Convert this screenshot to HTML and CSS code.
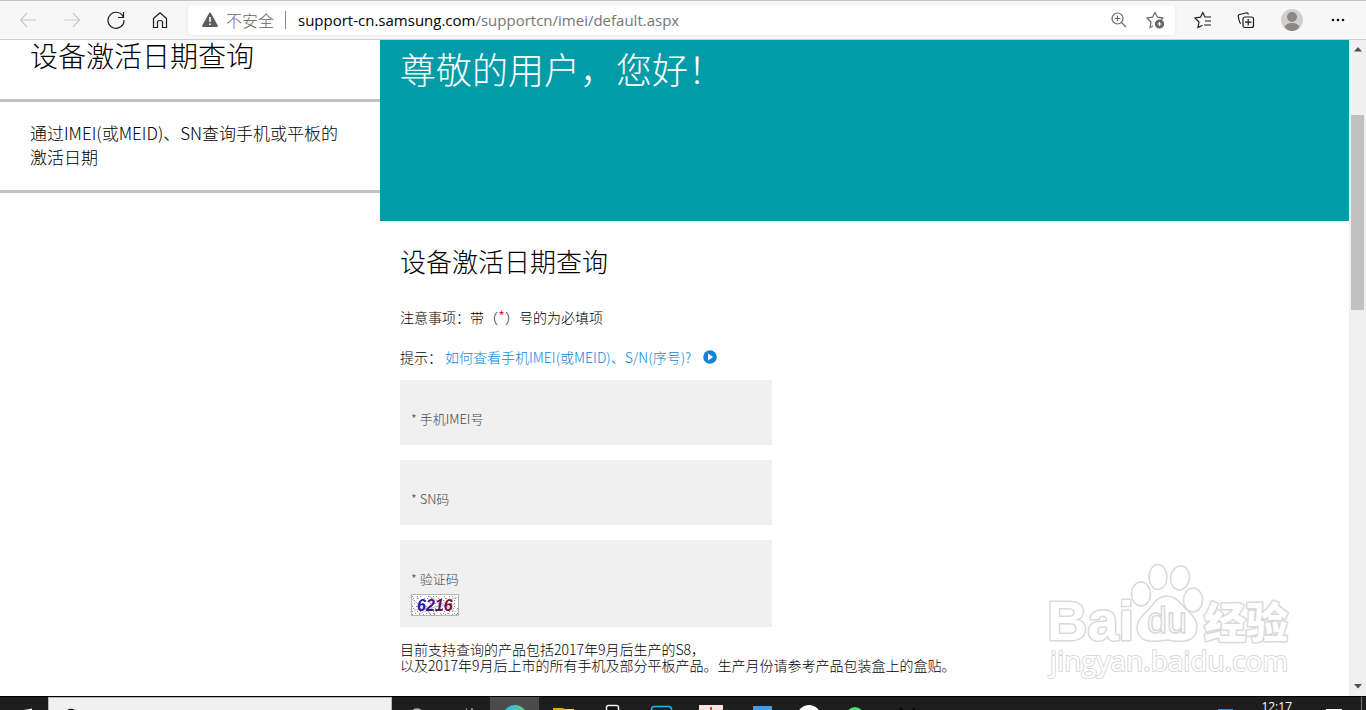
FILE: index.html
```html
<!DOCTYPE html>
<html lang="zh-CN">
<head>
<meta charset="utf-8">
<title>设备激活日期查询</title>
<link rel="stylesheet" href="styles.css">
</head>
<body>
<div class="browser">
  <header class="toolbar">
    <nav class="nav-buttons">
      <button class="icon-button disabled" aria-label="后退"><svg width="20" height="20" viewBox="0 0 20 20"><path d="M18 10H2.500M9 3L2.500 10L9 17"/></svg></button>
      <button class="icon-button disabled" aria-label="前进"><svg width="20" height="20" viewBox="0 0 20 20"><path d="M2 10H17.500M11 3L17.500 10L11 17"/></svg></button>
      <button class="icon-button" aria-label="刷新"><svg width="20" height="20" viewBox="0 0 20 20"><path d="M17.500 7.500A8 8 0 1 0 18 10M17.500 2V7.500H12"/></svg></button>
      <button class="icon-button" aria-label="主页"><svg width="20" height="20" viewBox="0 0 20 20"><path d="M3.500 8.500L10 2.700L16.500 8.500V17.500H12.500V12.500Q12.500 10.500 10 10.500T7.500 12.500V17.500H3.500Z"/></svg></button>
    </nav>
    <div class="address">
      <svg class="warning" width="18" height="18" viewBox="0 0 18 18"><path d="M9 1.500Q9.700 1.500 10 2.200L17 15Q17.200 16 16 16H2Q.8 16 1 15L8 2.200Q8.300 1.500 9 1.500Z" fill="#5d5d5d"/><path d="M9 6V11M9 12.500V14" stroke="#fff" stroke-width="1.600"/></svg>
      <span class="insecure">不安全</span>
      <span class="url"><b>support-cn.samsung.com</b>/supportcn/imei/default.aspx</span>
      <button class="icon-button muted" aria-label="缩放"><svg width="18" height="18" viewBox="0 0 18 18"><circle cx="7.500" cy="7.500" r="5.500"/><path d="M11.500 11.500L16 16M4.700 7.500H10.300M7.500 4.700V10.300"/></svg></button>
      <button class="icon-button muted" aria-label="添加到收藏夹"><svg width="18" height="18" viewBox="0 0 18 18"><path d="M7 15L4 16.500L5 11L1 7L6.500 6.200L9 1.500L11.500 6.200L16.800 7L15 9"/><circle cx="13.500" cy="13" r="4" fill="#666"/><path d="M11.500 13H15.500M13.500 11V15" stroke="#fff"/></svg></button>
    </div>
    <nav class="tools">
      <button class="icon-button" aria-label="收藏夹"><svg width="18" height="18" viewBox="0 0 18 18"><path d="M8.500 14.200L4 16.500L5 11L1 7L6.500 6.200L8.800 1.500L11 6H17M11 10H17M10 14H17"/></svg></button>
      <button class="icon-button" aria-label="集锦"><svg width="18" height="18" viewBox="0 0 18 18"><path d="M4 12.500Q2.500 12 2 9L1.300 5.500Q1 4 2.500 3.500L9 2Q11 1.500 11.300 3.500"/><rect x="6" y="6" width="10.500" height="10.500" rx="2"/><path d="M8 11.200H14.500M11.200 8V14.500"/></svg></button>
      <button class="icon-button" aria-label="用户"><svg width="24" height="24" viewBox="0 0 24 24"><circle cx="12" cy="12" r="11" fill="#d2d0ce" stroke="none"/><circle cx="12" cy="9" r="5" fill="#8a8785" stroke="none"/><path d="M4.500 19Q6 15 12 15T19.500 19Q16.500 23 12 23T4.500 19Z" fill="#8a8785" stroke="none"/></svg></button>
      <button class="icon-button" aria-label="更多"><svg width="18" height="18" viewBox="0 0 18 18"><g fill="#111" stroke="none"><circle cx="4" cy="9" r="1.300"/><circle cx="9" cy="9" r="1.300"/><circle cx="14" cy="9" r="1.300"/></g></svg></button>
    </nav>
  </header>

  <div class="viewport">
    <aside class="sidebar">
      <h1>设备激活日期查询</h1>
      <p>通过IMEI(或MEID)、SN查询手机或平板的激活日期</p>
    </aside>
    <main class="content">
      <div class="banner">尊敬的用户，您好！</div>
      <form class="query">
        <h2>设备激活日期查询</h2>
        <p class="note">注意事项：带（<em>*</em>）号的为必填项</p>
        <p class="tip">提示：<a href="#">如何查看手机IMEI(或MEID)、S/N(序号)?<svg width="14" height="14" viewBox="0 0 14 14"><circle cx="7" cy="7" r="6.800" fill="#0d86d8"/><path d="M5 3.500L10.200 7L5 10.500Z" fill="#fff"/></svg></a></p>
        <div class="field"><label for="imei">* 手机IMEI号</label><input id="imei" type="text"></div>
        <div class="field"><label for="sn">* SN码</label><input id="sn" type="text"></div>
        <div class="field captcha"><label for="code">* 验证码</label><input id="code" type="text">
          <svg width="48" height="22" viewBox="0 0 48 22">
            <rect x=".5" y=".5" width="47" height="21" fill="#fff" stroke="#b5b5b5"/>
            <g fill="none" stroke-width="1">
              <path d="M1 2.500H47M3 9.500H47M1 17.500H47" stroke="#8c8c6c" stroke-dasharray="1 4 1 2 1 7"/>
              <path d="M2 4.500H47M1 12.500H47M4 19.500H47" stroke="#9a86b8" stroke-dasharray="1 3 2 5 1 2"/>
              <path d="M3 6.500H47M2 14.500H47M1 20.500H47" stroke="#6f9a78" stroke-dasharray="1 6 1 3"/>
              <path d="M1 5L20 20M8 20L46 3M3 16L44 10M18 2L45 18" stroke="#c4bfc8"/>
            </g>
            <defs><linearGradient id="ink"><stop offset="0" stop-color="#1713c4"/><stop offset="1" stop-color="#8b0a2c"/></linearGradient></defs>
            <text class="code" x="6" y="17" fill="url(#ink)">6216</text>
          </svg>
        </div>
        <p class="scope">目前支持查询的产品包括2017年9月后生产的S8，<br>以及2017年9月后上市的所有手机及部分平板产品。生产月份请参考产品包装盒上的盒贴。</p>
      </form>
    </main>
    <div class="scrollbar">
      <svg width="8" height="5" viewBox="0 0 8 5"><path d="M4 0L8 4.500H0Z" fill="#505050"/></svg>
      <div class="track"><div class="thumb"></div></div>
      <svg width="8" height="5" viewBox="0 0 8 5"><path d="M0 0H8L4 4.500Z" fill="#505050"/></svg>
    </div>
    <svg class="watermark" width="260" height="130" viewBox="0 0 260 130">
      <g fill="#fff" stroke="#d9d9d9" stroke-width="3" stroke-linejoin="round" paint-order="stroke">
        <text class="brand" x="6" y="82">Bai</text>
        <text class="brand-cn" x="163" y="80">经验</text>
        <text class="site" x="9" y="113">jingyan.baidu.com</text>
      </g>
      <g fill="#fff" stroke="#d8d8d8" stroke-width="1.500">
        <ellipse cx="100" cy="36" rx="9.500" ry="12"/>
        <ellipse cx="117" cy="19" rx="9" ry="12.500"/>
        <ellipse cx="139" cy="20" rx="9.500" ry="12" transform="rotate(8 139 20)"/>
        <ellipse cx="152" cy="42" rx="9.500" ry="12"/>
        <path d="M126 38C136 38 139 46 147 53C155 60 158 67 155 75C151 85 139 84 126 82C113 84 101 85 97 75C94 67 98 60 106 53C113 46 116 38 126 38Z"/>
        <text class="du" x="106" y="75">du</text>
      </g>
    </svg>
  </div>

  <footer class="taskbar">
    <svg class="start" width="48" height="13" viewBox="0 0 48 13"><path d="M24 13L32 11.500V13Z" fill="#fff"/></svg>
    <div class="search"><svg width="12" height="13" viewBox="0 0 12 13"><circle cx="6" cy="17" r="5.500" fill="none" stroke="#111" stroke-width="1.500"/></svg></div>
    <div class="apps">
      <svg width="49" height="13" viewBox="0 0 49 13"><circle cx="25" cy="18" r="6" fill="none" stroke="#bbb" stroke-width="1.500"/></svg>
      <svg width="49" height="13" viewBox="0 0 49 13"><path d="M25 12H26M30 12H32" stroke="#ddd"/></svg>
      <svg class="active" width="49" height="13" viewBox="0 0 49 13"><defs><linearGradient id="edge"><stop offset=".3" stop-color="#2fbce0"/><stop offset="1" stop-color="#62d568"/></linearGradient></defs><circle cx="25" cy="20" r="12" fill="url(#edge)"/></svg>
      <svg width="49" height="13" viewBox="0 0 49 13"><path d="M14 11H24L26 13H14Z" fill="#e7a613"/><path d="M25 12H35V13H25Z" fill="#f4cc60"/></svg>
      <svg width="49" height="13" viewBox="0 0 49 13"><rect x="18.500" y="8.500" width="12" height="16" rx="2" fill="#111" stroke="#eee" stroke-width="1.500"/></svg>
      <svg width="49" height="13" viewBox="0 0 49 13"><rect x="14.500" y="9.500" width="20" height="16" rx="3" fill="#11222a" stroke="#27b5e7" stroke-width="1.500"/></svg>
      <svg width="49" height="13" viewBox="0 0 49 13"><path d="M13 8H37V13H13Z" fill="#fbe3df"/><path d="M25 10V13" stroke="#c44" stroke-width="2"/></svg>
      <svg width="49" height="13" viewBox="0 0 49 13"><path d="M18 9H37V13H18Z" fill="#3f9eec"/></svg>
      <svg width="49" height="13" viewBox="0 0 49 13"><circle cx="25" cy="20" r="12" fill="#fff"/></svg>
      <svg width="49" height="13" viewBox="0 0 49 13"><circle cx="22" cy="19" r="9" fill="#48df70"/></svg>
      <svg width="49" height="13" viewBox="0 0 49 13"><path d="M18 10L22 13H30L33 10V13H18Z" fill="#050505"/></svg>
    </div>
    <svg width="18" height="13" viewBox="0 0 18 13"><path d="M1 12.500H16" stroke="#1c95df"/></svg>
    <time>12:17</time>
    <svg width="20" height="13" viewBox="0 0 20 13"><path d="M1 12.500H17" stroke="#fff"/></svg>
    <div class="desktop"></div>
  </footer>
</div>
</body>
</html>
```
FILE: styles.css
```css
* { box-sizing: border-box; }
body {
  margin: 0;
  background: #fff;
  color: #000;
  font-family: "Noto Sans CJK SC", sans-serif;
  font-weight: 300;
}
h1, h2, p { margin: 0; font-weight: 300; }
svg { flex: none; display: block; }
.browser {
  display: grid;
  grid-template-rows: 40px minmax(0, 1fr) 14px;
  height: 100vh;
  overflow: hidden;
}

.toolbar {
  display: flex;
  align-items: center;
  background: #f7f7f7;
  border-top: 1px solid #c3c3c3;
  border-bottom: 1px solid #d0d0d0;
}
.icon-button {
  display: flex;
  padding: 0;
  border: 0;
  background: none;
  color: #1b1b1b;
}
.icon-button svg { fill: none; stroke: currentColor; stroke-width: 1.2; }
.disabled { color: #c9c9c9; }
.muted { color: #666; }
.nav-buttons { display: flex; gap: 24px; padding: 0 18px; }
.address {
  display: flex;
  flex: 1;
  align-items: center;
  height: 30px;
  padding: 0 11px 0 13px;
  border-radius: 4px;
  background: #fff;
  box-shadow: 0 0 3px #e2e2e2;
}
.insecure {
  margin: 0 11px 0 7px;
  color: #666;
  font-size: 16px;
  line-height: 20px;
}
.url {
  flex: 1;
  padding-left: 12px;
  border-left: 1px solid #888;
  color: #767676;
  font: 15px/18px "Open Sans", "Noto Sans", sans-serif;
}
.url b { color: #000; font-weight: 400; }
.muted + .muted { margin-left: 18px; }
.tools { display: flex; gap: 25px; align-items: center; padding: 0 19px; }

.viewport {
  position: relative;
  display: grid;
  grid-template-columns: 380px minmax(0, 1fr) 17px;
  overflow: hidden;
}
.sidebar h1 {
  height: 62px;
  padding-left: 30px;
  border-bottom: 3px solid #c1c1c1;
  font-size: 28px;
  line-height: 30px;
}
.sidebar p {
  padding: 19px 36px 21px 30px;
  border-bottom: 3px solid #c1c1c1;
  font-size: 17px;
  line-height: 24px;
}
.banner {
  height: 181px;
  padding: 2px 20px;
  background: #029ca8;
  color: #fff;
  font-size: 36px;
  line-height: 52px;
}
.query { padding: 22px 20px 0; font-size: 14px; line-height: 20px; }
.query h2 { font-size: 26px; line-height: 36px; }
.note { padding-top: 28px; }
.note em { color: #e00; font-size: 16px; line-height: 16px; font-style: normal; }
.tip { display: flex; gap: 3px; padding: 20px 0 13px; }
.tip a {
  display: flex;
  gap: 12px;
  align-items: center;
  color: #0d86d8;
  text-decoration: none;
}
.field {
  display: flex;
  flex-wrap: wrap;
  width: 372px;
  max-width: 100%;
  margin-bottom: 15px;
  padding: 29px 11px 16px;
  background: #f0f0f0;
  color: #444;
  font-size: 13px;
}
.field input {
  flex: 1 0 75%;
  min-width: 0;
  height: 20px;
  border: 0;
  outline: 0;
  background: transparent;
  font: inherit;
}
.captcha { row-gap: 5px; margin-bottom: 14px; padding-bottom: 11px; }
.code { font: italic bold 16px "Liberation Sans", Arial, sans-serif; }
.scope { line-height: 16px; }

.scrollbar {
  display: flex;
  flex-direction: column;
  align-items: center;
  padding: 7px 0;
  background: #f0f0f0;
}
.track { flex: 1; width: 13px; padding-top: 63px; }
.thumb { height: 195px; background: #c1c1c1; }
.watermark { position: absolute; right: 65px; bottom: 8px; }
.brand { font: bold 56px "Liberation Sans", Arial, sans-serif; }
.brand-cn { font: 900 42px "Noto Sans CJK SC", sans-serif; }
.site { font: 28px "Open Sans", "Noto Sans", sans-serif; stroke-width: 2px; }
.du { font: 36px "Liberation Sans", Arial, sans-serif; }

.taskbar {
  display: flex;
  border-top: 1px solid #000;
  background: #1e1e1e;
  overflow: hidden;
}
.search {
  width: 344px;
  padding-left: 16px;
  border: 1px solid #b8b8b8;
  border-bottom: 0;
  background: #f0f0f0;
}
.apps { display: flex; flex: 1; }
.active { background: #4b4b4b; }
.taskbar time {
  margin: 0 33px 0 26px;
  color: #fff;
  font: 12px/20px "Open Sans", "Noto Sans", sans-serif;
}
.desktop { width: 5px; margin-left: 16px; border-left: 1px solid #777; }
```
